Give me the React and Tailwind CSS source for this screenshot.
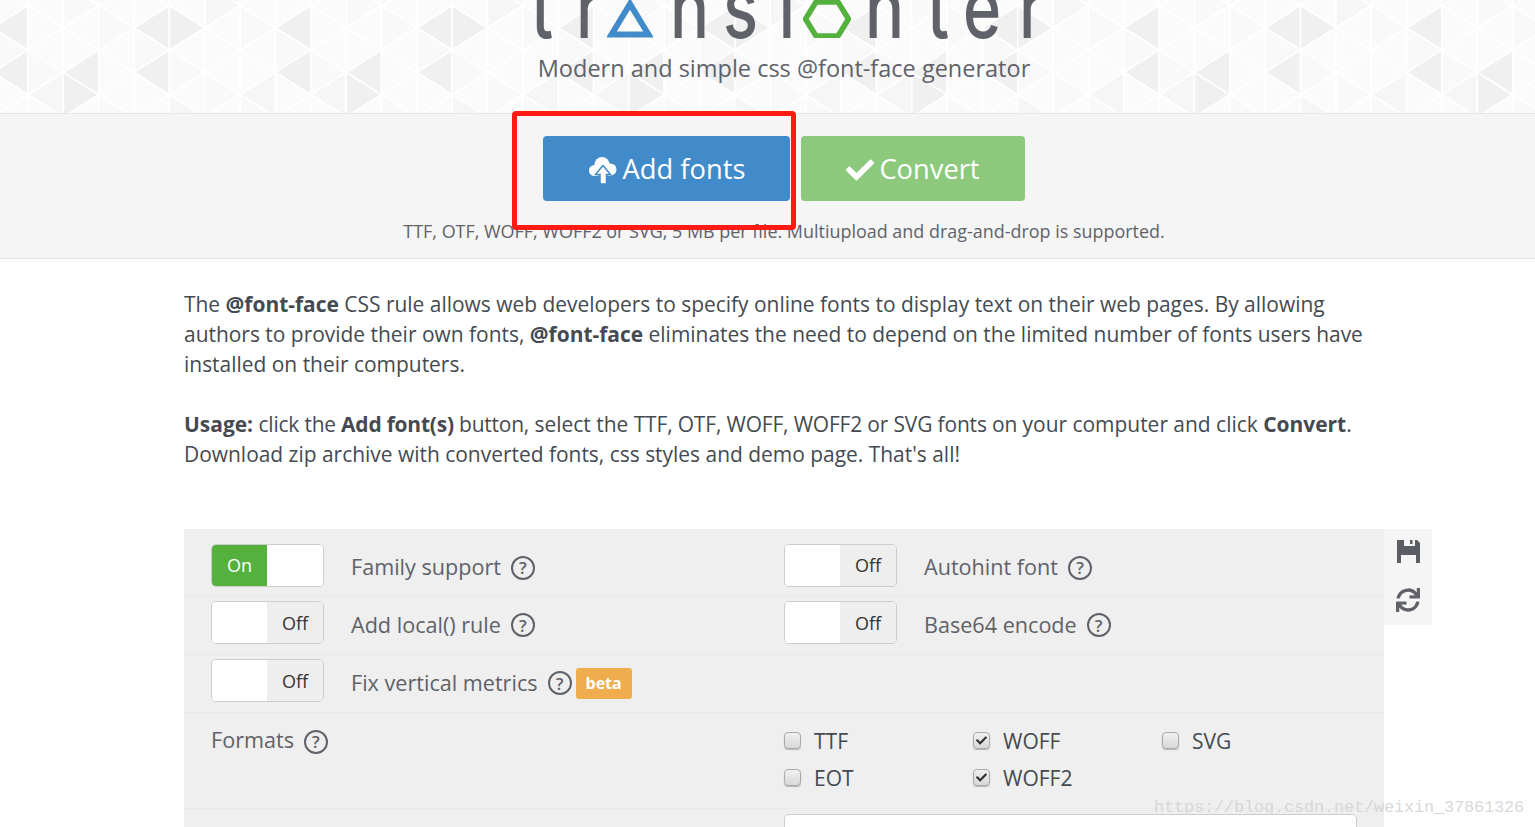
import React from "react";
import { FaCheck, FaSync } from "react-icons/fa";

const COL = 35.35;
const ROW = 22.3;
const DARK = ["3:3", "4:3", "7:3", "1:5", "3:5", "7:5", "1:6"];
const MID = ["5:1", "5:2", "6:6", "0:6", "2:1", "4:7"];

function trianglePattern() {
  const out = [];
  for (let c = -1; c < 44; c++) {
    const s = ((c % 8) + 8) % 8;
    const xLeft = 28 + c * COL;
    for (let j = 0; j < 7; j++) {
      const y = (n) => -39.1 + ROW * n;
      const nodeX = (n) => ((n + c) % 2 === 0 ? xLeft : xLeft + COL);
      const pts = [j, j + 1, j + 2].map((n) => `${nodeX(n + 4)},${y(n)}`).join(" ");
      const key = `${s}:${j + 1}`;
      let fill = (s * 3 + j * 5) % 4 === 0 ? "#f9f9f9" : "#fbfbfb";
      if (MID.includes(key)) fill = "#f6f6f6";
      if (DARK.includes(key)) fill = "#f0f0f0";
      out.push(<polygon key={`${c}-${j}`} points={pts} fill={fill} stroke="#ffffff" strokeWidth="1.6" />);
    }
  }
  return out;
}

function Letter({ className, children }) {
  return <span className={`inline-block origin-bottom scale-y-[1.3] ${className}`}>{children}</span>;
}

function Logo() {
  return (
    <div className="flex h-[38px] items-end text-[#5f6269] font-['Inter',sans-serif] font-medium text-[65px] leading-[47px]">
      <Letter className="ml-[347px] w-[45px]">t</Letter>
      <Letter className="w-[31px]">r</Letter>
      <svg viewBox="0 0 46 38" className="w-[46px] h-[38px] mr-[17px]">
        <polygon points="23,4 41.5,34.5 4.5,34.5" fill="none" stroke="#428bca" strokeWidth="6" />
      </svg>
      <Letter className="w-[53px]">n</Letter>
      <Letter className="w-[53px]">s</Letter>
      <Letter className="w-[27px]">f</Letter>
      <svg viewBox="0 0 48 38" className="w-[48px] h-[38px] mr-[14px]">
        <polygon points="13,2 35,2 45.5,19 35,36 13,36 2.5,19" fill="none" stroke="#54b13d" strokeWidth="5.5" />
      </svg>
      <Letter className="w-[62px]">n</Letter>
      <Letter className="w-[36px]">t</Letter>
      <Letter className="w-[56px]">e</Letter>
      <Letter>r</Letter>
    </div>
  );
}

function CloudIcon() {
  return (
    <svg viewBox="0 0 29 28" className="h-[28px] w-[29px]">
      <g fill="#ffffff">
        <circle cx="14" cy="8.5" r="7.5" />
        <circle cx="6.5" cy="14.5" r="5.5" />
        <circle cx="22.5" cy="13.5" r="6" />
        <rect x="6.5" y="11" width="16" height="8.5" />
      </g>
      <polygon points="15,9.5 22.5,18.5 18.5,18.5 18.5,28 12,28 12,18.5 7.5,18.5" fill="#ffffff" stroke="#428bca" strokeWidth="1.5" />
    </svg>
  );
}

function SaveIcon() {
  return (
    <svg viewBox="0 0 23 23" className="h-[23px] w-[23px]">
      <path
        fillRule="evenodd"
        fill="#5a5d63"
        d="M0 0H20L23 3V23H0ZM7 0V6H18V0ZM4 15V23H19V15Z"
      />
      <rect x="13" y="0" width="2.5" height="4" fill="#5a5d63" />
    </svg>
  );
}

function Help() {
  return (
    <span className="inline-flex w-6 h-6 shrink-0 items-center justify-center rounded-full border-2 border-[#5f6269] text-[17px] font-semibold leading-none text-[#5f6269]">
      ?
    </span>
  );
}

function Toggle({ on }) {
  return (
    <div className="mb-[4px] flex w-[113px] h-[43px] overflow-hidden rounded-[5px] border border-[#cccccc] bg-white text-[18px] leading-none">
      {on ? (
        <>
          <span className="flex w-[55px] items-center justify-center bg-[#54b13d] text-white">On</span>
          <span className="flex-1 bg-white" />
        </>
      ) : (
        <>
          <span className="w-[55px] bg-white" />
          <span className="flex flex-1 items-center justify-center bg-[#eeeeee] text-[#333333]">Off</span>
        </>
      )}
    </div>
  );
}

function Option({ on, label, beta }) {
  return (
    <div className="flex items-center">
      <Toggle on={on} />
      <span className="ml-[27px] text-[21.6px] font-medium leading-[30px] text-[#5f6269]">{label}</span>
      <span className="ml-[10px] mt-[2px]">
        <Help />
      </span>
      {beta && (
        <span className="ml-[4px] mt-[2px] rounded-[3px] bg-[#f0ad4e] px-[10px] py-[4px] text-[16px] font-bold leading-[23px] text-white">
          beta
        </span>
      )}
    </div>
  );
}

function Format({ label, checked }) {
  return (
    <div className="flex h-[30px] w-[189px] items-center">
      <span className="mb-[2px] flex h-[17px] w-[17px] items-center justify-center rounded-[4px] border border-[#aaaaaa] bg-gradient-to-b from-[#f0f0f0] to-[#d8d8d8] shadow-[0_1px_1px_rgba(0,0,0,0.25)]">
        {checked && <FaCheck className="text-[11px] text-[#333333]" />}
      </span>
      <span className="ml-[13px] text-[21px] leading-[30px] text-[#444a50]">{label}</span>
    </div>
  );
}

export default function App() {
  return (
    <div className="relative h-[827px] w-[1535px] overflow-hidden bg-white font-['Open_Sans',sans-serif] text-[#5f6269]">
      <header className="relative h-[114px] overflow-hidden border-b border-[#e6e6e6] bg-white">
        <svg className="absolute inset-0 h-[114px] w-[1535px]">{trianglePattern()}</svg>
        <div className="relative ml-[184px] w-[1200px]">
          <Logo />
          <p className="mt-[15px] text-center text-[23.5px] font-medium leading-[30px]">Modern and simple css @font-face generator</p>
        </div>
      </header>

      <section className="h-[145px] border-b border-[#e6e6e6] bg-[#f5f5f5] pt-[22px]">
        <div className="ml-[184px] w-[1200px]">
          <div className="flex justify-center gap-[11px]">
            <button className="flex h-[65px] w-[247px] items-center justify-center gap-[6px] rounded-[4px] bg-[#428bca] pt-[2px] text-[27.3px] text-white">
              <CloudIcon />
              Add fonts
            </button>
            <button className="flex h-[65px] w-[224px] items-center justify-center gap-[5px] rounded-[4px] bg-[#8dc97d] pt-[2px] text-[27.3px] text-white">
              <FaCheck className="text-[28px]" />
              Convert
            </button>
          </div>
          <p className="mt-[16px] text-center text-[17.95px] leading-[28px]">
            TTF, OTF, WOFF, WOFF2 or SVG, 5 MB per file. Multiupload and drag-and-drop is supported.
          </p>
        </div>
      </section>

      <main className="ml-[184px] w-[1248px] pt-[30px]">
        <div className="w-[1200px] text-[20.95px] leading-[30px] text-[#444a50]">
          <p>
            The <b>@font-face</b> CSS rule allows web developers to specify online fonts to display text on their web pages. By allowing authors to provide their own fonts, <b>@font-face</b> eliminates the need to depend on the limited number of fonts users have installed on their computers.
          </p>
          <p className="mt-[30px]">
            <b>Usage:</b> <span className="tracking-[-0.2px]">click the <b>Add font(s)</b> button,</span> select the <span className="tracking-[-0.15px]">TTF, OTF, WOFF, WOFF2 or SVG fonts on</span> your computer and click <b>Convert</b>. Download zip archive with converted fonts, css styles and demo page. That's all!
          </p>
        </div>

        <div className="mt-[60px] flex items-start">
          <div className="w-[1200px] bg-[#efefef]">
            <div className="grid h-[68px] grid-cols-[573px_1fr] items-center border-b border-[#e9e9e9] pl-[27px] pt-[9px]">
              <Option on label="Family support" />
              <Option label="Autohint font" />
            </div>
            <div className="grid h-[58px] grid-cols-[573px_1fr] items-center border-b border-[#e9e9e9] pb-[2px] pl-[27px]">
              <Option label="Add local() rule" />
              <Option label="Base64 encode" />
            </div>
            <div className="grid h-[58px] grid-cols-[573px_1fr] items-center border-b border-[#e9e9e9] pb-[2px] pl-[27px]">
              <Option label="Fix vertical metrics" beta />
            </div>
            <div className="grid h-[96px] grid-cols-[573px_1fr] border-b border-[#e9e9e9] pl-[27px] pt-[12px]">
              <div className="flex items-center self-start">
                <span className="text-[21.6px] font-medium leading-[30px]">Formats</span>
                <span className="ml-[10px] mt-[4px]">
                  <Help />
                </span>
              </div>
              <div className="flex flex-wrap content-start gap-y-[7px] pt-[1px]">
                <Format label="TTF" />
                <Format label="WOFF" checked />
                <Format label="SVG" />
                <Format label="EOT" />
                <Format label="WOFF2" checked />
              </div>
            </div>
            <div className="h-[60px] pl-[600px] pt-[5px]">
              <div className="h-[50px] w-[573px] rounded-[5px] border border-[#cccccc] bg-white" />
            </div>
          </div>
          <div className="flex h-[96px] w-[48px] flex-col items-center gap-[25px] bg-[#f5f5f5] pt-[11px] text-[24px] text-[#5f6269]">
            <SaveIcon />
            <FaSync />
          </div>
        </div>
      </main>

      <div className="absolute left-[512px] top-[111px] h-[119px] w-[284px] rounded-[4px] border-[5px] border-[#ff1a12]" />
      <span className="absolute left-[1154px] top-[797px] font-['Liberation_Mono',monospace] text-[17px] leading-[22px] text-[#d4d4d4]/90 tracking-[-0.2px]">
        https://blog.csdn.net/weixin_37861326
      </span>
    </div>
  );
}
